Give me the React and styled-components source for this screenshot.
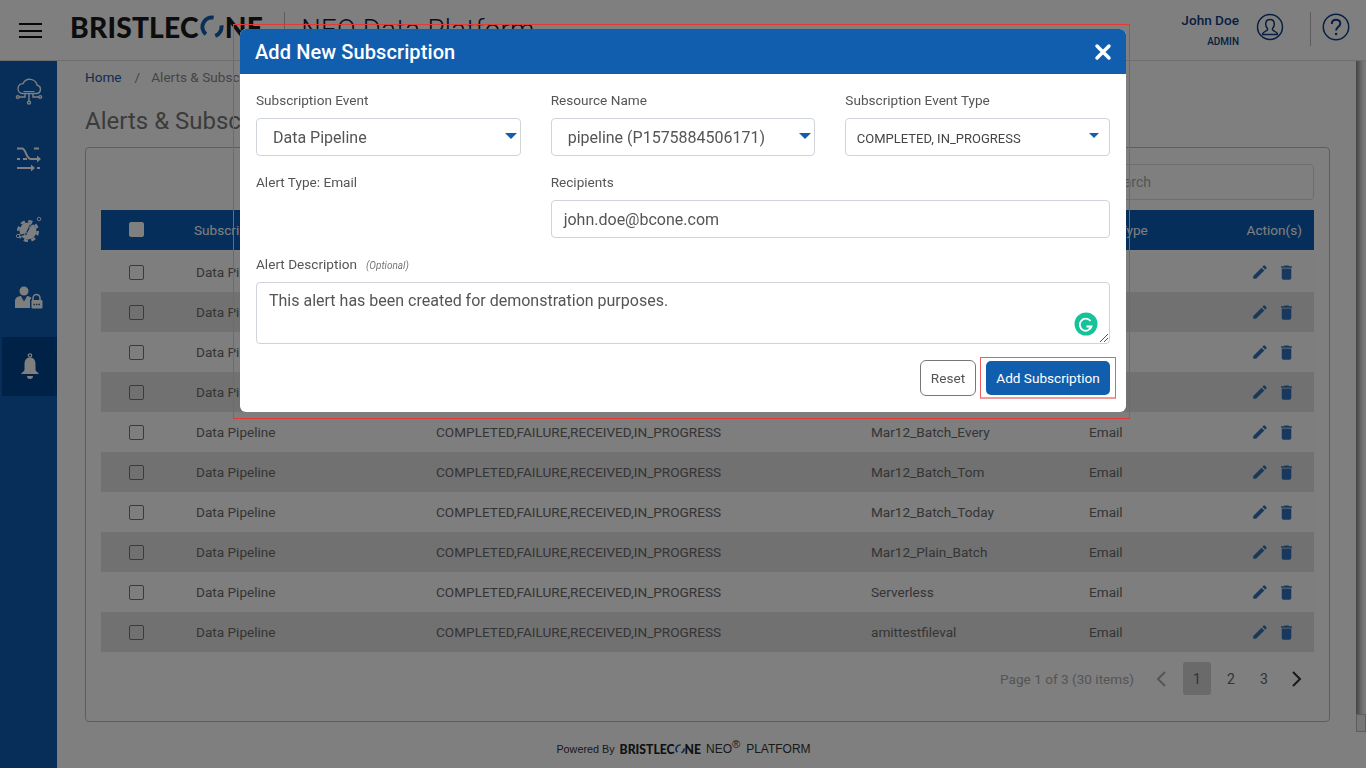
import React from "react";
import styled, { createGlobalStyle } from "styled-components";
import { MdEdit, MdDelete } from "react-icons/md";

const Global = createGlobalStyle`
  html, body { margin: 0; padding: 0; height: 100%; overflow: hidden; background: #fff; }
  body { font-family: Roboto, "Liberation Sans", sans-serif; }
  * { box-sizing: border-box; }
`;

const Page = styled.div`
  width: 1366px; height: 768px; display: flex; flex-direction: column; overflow: hidden; background: #fff;
`;
const TopBar = styled.header`
  height: 61px; flex: none; display: flex; align-items: flex-start; background: #fff; border-bottom: 1px solid #ddd;
`;
const Burger = styled.div`
  width: 23px; margin: 23px 0 0 19px; height: 15px; display: flex; flex-direction: column; justify-content: space-between;
  span { display: block; height: 2px; background: #111; }
`;
const Logo = styled.div`
  margin: 9px 0 0 28px; display: flex; align-items: center; height: 36px;
  font-family: Lato, sans-serif; font-weight: 900; color: #1a1a1a; font-size: 28.2px; letter-spacing: 0.2px; white-space: nowrap;
  svg { margin: 0 1px 0 1px; }
`;
const VBar = styled.div`
  width: 1px; height: 34px; background: #bbb; margin: ${p => p.$m};
`;
const Product = styled.div`
  font-size: 27.5px; font-weight: 300; color: #111b3a; margin: 13px 0 0 16px; letter-spacing: 0.3px; white-space: nowrap;
`;
const UserBlock = styled.div`
  margin: 12px 0 0 auto; text-align: right; color: #0f3f80;
`;
const UserName = styled.div`font-size: 13.6px; font-weight: 500; line-height: 17px;`;
const UserRole = styled.div`font-size: 10px; font-weight: 500; line-height: 12px; margin-top: 7px;`;
const RoundIcon = styled.svg`
  width: 28px; height: 28px; flex: none; margin: ${p => p.$m}; color: #0f3f80;
`;

const Body = styled.div`
  flex: 1; display: flex; min-height: 0;
`;
const Side = styled.nav`
  width: 57px; flex: none; background: #0c5cb0; display: flex; flex-direction: column; gap: 10px;
`;
const SideItem = styled.div`
  height: 59px; display: flex; align-items: center; justify-content: center;
  margin-left: ${p => (p.$active ? 2 : 0)}px;
  background: ${p => (p.$active ? "#02458f" : "transparent")};
  svg { display: block; }
`;
const Main = styled.main`
  flex: 1; min-width: 0; padding: 7px 26px 0 28px; display: flex; flex-direction: column;
`;
const Crumbs = styled.div`
  font-size: 13.6px; line-height: 18px; color: #8a8a8a; display: flex; white-space: nowrap;
  a { color: #1c58a8; }
  i { font-style: normal; margin: 0 11px 0 13px; }
`;
const Title = styled.h1`
  margin: 20px 0 11px; font-size: 24px; line-height: 30px; font-weight: 400; color: #777;
`;
const Card = styled.section`
  height: 575px; border: 1px solid #bbb; border-radius: 4px; padding: 16px 15px 0 15px; display: flex; flex-direction: column;
`;
const SearchRow = styled.div`
  display: flex; justify-content: flex-end; height: 46px;
`;
const SearchBox = styled.div`
  width: 219px; height: 36px; border: 1px solid #ddd; border-radius: 4px; padding: 0 12px; line-height: 34px; font-size: 14px; color: #aaa;
`;
const Row = styled.div`
  display: grid; grid-template-columns: 95px 240px 435px 218px 1fr 62px; align-items: center;
  height: 40px; font-size: 13.6px; white-space: nowrap;
  color: ${p => (p.$head ? "#fff" : "#6a6a6a")};
  background: ${p => (p.$head ? "#0c5cb4" : p.$alt ? "#e2e2e2" : "#fcfcfc")};
  margin-bottom: ${p => (p.$head ? 2 : 0)}px;
  padding-bottom: ${p => (p.$head ? 1 : 0)}px;
`;
const Check = styled.span`
  justify-self: start; margin-left: 28px; width: 15px; height: 15px; border-radius: 2px; display: block;
  background: ${p => (p.$head ? "#fff" : "transparent")};
  border: 1px solid ${p => (p.$head ? "#fff" : "#777")};
`;
const HeadCell = styled.span`
  margin-left: -2px; font-weight: 400;
`;
const ActionsHead = styled.span`
  grid-column: 6; justify-self: end; margin-right: 12px;
`;
const Actions = styled.span`
  display: flex; gap: 8px; align-items: center; justify-self: end; margin-right: 18px; color: #2f73bd;
  svg { display: block; }
`;
const Pager = styled.div`
  display: flex; align-items: center; justify-content: flex-end; margin-top: 10px; height: 33px; padding-right: 11px; font-size: 14px; color: #666;
`;
const PagerInfo = styled.span`
  color: #aaa; margin-right: 21px; font-size: 13.6px;
`;
const PageBtn = styled.span`
  width: 28px; height: 33px; display: flex; align-items: center; justify-content: center; border-radius: 3px; margin-left: ${p => p.$ml || 0}px;
  background: ${p => (p.$on ? "#d4d4d4" : "transparent")};
`;
const Chevron = styled.svg`
  display: block; margin: ${p => p.$m};
`;
const Foot = styled.footer`
  margin-top: 19px; display: flex; align-items: center; justify-content: center; color: #333;
  font-family: "Liberation Sans", sans-serif; font-size: 12px; height: 16px; white-space: nowrap; margin-left: -48px;
`;
const PoweredBy = styled.span`font-size: 10.8px; margin-right: 5px;`;
const FootLogo = styled.span`
  font-family: Lato, sans-serif; font-weight: 900; font-size: 12.2px; color: #222; display: flex; align-items: center; margin-right: 5px;
`;
const FootNeo = styled.span`
  sup { font-size: 11px; line-height: 0; }
  b { font-weight: 400; margin-left: 6px; }
`;
const ScrollStrip = styled.div`
  width: 10px; flex: none; height: 671px; display: flex; flex-direction: column; justify-content: flex-end;
  background: linear-gradient(90deg, #888 0%, #e8e8e8 70%, #f4f4f4 100%);
`;
const ScrollThumb = styled.div`
  height: 18px; background: #eee; border: 1px solid #bbb;
`;

const Overlay = styled.div`
  position: fixed; inset: 0; background: rgba(0,0,0,.5); display: flex; justify-content: center; align-items: flex-start; padding-top: 29px;
`;
const Modal = styled.div`
  position: relative; width: 886px; height: 383px; background: #fff; border-radius: 6px; display: flex; flex-direction: column;
`;
const Marker = styled.div`
  position: absolute; left: -7px; top: -5px; right: -4px; bottom: -7px; border: 1px solid #e53935; pointer-events: none;
`;
const ModalHead = styled.div`
  height: 45px; background: #115eaf; color: #fff; border-radius: 6px 6px 0 0; display: flex; align-items: center; justify-content: space-between;
  padding: 0 14px 0 15px; font-size: 20px; font-weight: 500; letter-spacing: 0.1px;
  svg { display: block; }
`;
const Form = styled.div`
  padding: 17px 16px 0; display: flex; flex-direction: column;
`;
const Grid = styled.div`
  display: grid; grid-template-columns: repeat(3, 1fr); column-gap: 30px;
`;
const Field = styled.div`
  grid-column: ${p => p.$span || "auto"}; height: 82px;
`;
const Label = styled.div`
  font-size: 13.6px; line-height: 18px; color: #555; margin-bottom: 9px;
  em { font-size: 10px; margin-left: 9px; color: #777; }
`;
const Select = styled.div`
  position: relative; height: 38px; border: 1px solid #ced4da; border-radius: 4px; display: flex; align-items: center;
  padding-left: ${p => (p.$small ? 10.5 : 16)}px; padding-top: ${p => (p.$small ? 2 : 0)}px;
  font-size: ${p => (p.$small ? 13 : 16)}px; color: ${p => (p.$small ? "#444" : "#555")}; white-space: nowrap;
  &::after {
    content: ""; position: absolute; top: 14px; right: ${p => (p.$small ? 10 : 3)}px;
    border-left: ${p => (p.$small ? 5 : 6)}px solid transparent; border-right: ${p => (p.$small ? 5 : 6)}px solid transparent;
    border-top: ${p => (p.$small ? 5 : 6)}px solid #115eaf;
  }
`;
const Input = styled.div`
  height: 38px; border: 1px solid #ced4da; border-radius: 4px; padding-left: 12px; display: flex; align-items: center; font-size: 16px; color: #555;
`;
const Textarea = styled.div`
  position: relative; height: 62px; margin-top: -2px; border: 1px solid #ced4da; border-radius: 4px; padding: 8px 12px; font-size: 16px; line-height: 20px; color: #555;
`;
const GrammarlyBadge = styled.svg`
  position: absolute; right: 11px; bottom: 7px; width: 24px; height: 24px;
`;
const ResizeGrip = styled.svg`
  position: absolute; right: 0; bottom: 0; width: 10px; height: 10px;
`;
const ButtonRow = styled.div`
  display: flex; justify-content: flex-end; align-items: center; margin-top: 16px; gap: 10px;
`;
const ResetBtn = styled.button`
  width: 56px; height: 36px; border: 1px solid #777; border-radius: 6px; background: #fff; font: 400 13.6px Roboto, sans-serif; color: #555; padding: 0;
`;
const SubmitWrap = styled.div`position: relative;`;
const SubmitBtn = styled.button`
  display: block; width: 124px; height: 34px; border: 0; border-radius: 5px; background: #115eaf; color: #fff; font: 400 13.6px Roboto, sans-serif; padding: 0;
`;
const SubmitMarker = styled.div`
  position: absolute; left: -6px; right: -6px; top: -4px; bottom: -4px; border: 1px solid #f25c5c; border-bottom-width: 2px; border-bottom-color: #f59a9a; pointer-events: none;
`;

const LogoO = ({ s }) => (
  <svg width={s} height={s} viewBox="0 0 24 24" fill="none" stroke="#115eaf" strokeWidth="4">
    <path d="M13.65 2.64A9.5 9.5 0 0 0 5.89 19.28" />
    <path d="M15.25 20.93A9.5 9.5 0 0 0 21.36 10.35" />
  </svg>
);

const CloudIcon = () => (
  <svg width="28" height="28" viewBox="0 0 28 28" fill="none" stroke="#fff" strokeWidth="1.4">
    <path d="M7 16.5h14.5a4.2 4.2 0 0 0 .6-8.3A7.5 7.5 0 0 0 8 6.6 5 5 0 0 0 7 16.5z" />
    <path d="M8.5 14.5h11" strokeWidth="1" />
    <path d="M14 16.5v8M10 16.5v3.5H4M18 16.5v3.5h6" />
    <circle cx="2.8" cy="20" r="1.4" /><circle cx="25.2" cy="20" r="1.4" /><circle cx="14" cy="25.6" r="1.5" />
  </svg>
);
const ShuffleIcon = () => (
  <svg width="26" height="28" viewBox="0 0 26 28" fill="none" stroke="#fff" strokeWidth="2">
    <path d="M1 2.500H6C10 2.500 10 13 15 13H22" />
    <path d="M1 13h3M7 13h4M18 2.500h5" />
    <path d="M1 22H16M21 22h3" />
    <path d="M21 9.500l4 3.500-4 3.500zM15 18.500l4 3.500-4 3.500z" fill="#fff" stroke="none" />
  </svg>
);
const GearIcon = () => (
  <svg width="27" height="26" viewBox="0 0 27 26">
    <circle cx="13" cy="15" r="8.500" fill="#fff" />
    <circle cx="13" cy="15" r="9.800" fill="none" stroke="#fff" strokeWidth="2.600" strokeDasharray="4.200 3.500" />
    <path d="M3 20l8-2 4-8 9-7" fill="none" stroke="#0c5cb0" strokeWidth="1.300" />
    <g fill="#0c5cb0" stroke="#fff" strokeWidth=".9">
      <circle cx="3" cy="20" r="1.700" /><circle cx="11" cy="18" r="1.400" /><circle cx="15" cy="10" r="1.400" /><circle cx="24" cy="3" r="1.800" />
    </g>
  </svg>
);
const UserLockIcon = () => (
  <svg width="28" height="24" viewBox="0 0 28 24">
    <circle cx="9" cy="5" r="4.500" fill="#fff" />
    <path fill="#fff" d="M0 22v-7c0-3 2-4.500 6-5l2.600 5.500L9 12l.4 3.500L12 10c2 .3 3.600 1 4.500 2L15 14v8z" />
    <path d="M18 14v-2a3.500 3.500 0 0 1 7 0v2" fill="none" stroke="#fff" strokeWidth="1.500" />
    <rect x="16.500" y="14" width="11" height="8.500" rx="1.200" fill="#fff" />
    <path d="M18.500 18.500h7" stroke="#0c5cb0" strokeWidth="1.500" strokeDasharray="1.500 1" />
  </svg>
);
const BellIcon = () => (
  <svg width="18" height="28" viewBox="0 0 18 28">
    <circle cx="9" cy="2.500" r="1.700" fill="none" stroke="#fff" strokeWidth="1.200" />
    <path fill="#fff" d="M9 4.500c3.500 0 5.500 2.800 5.500 6.500v5.500c0 1.500 1.500 2.500 3 3.500v1H.5v-1c1.500-1 3-2 3-3.500V11c0-3.700 2-6.500 5.500-6.500z" />
    <path fill="#fff" d="M6 23h6a3 3 0 0 1-6 0z" />
  </svg>
);

const rows = [
  ["Mar12_Batch_Hourly", 0], ["Mar12_Batch_Daily", 1], ["Mar12_Batch_Weekly", 0], ["Mar12_Batch_Now", 1],
  ["Mar12_Batch_Every", 0], ["Mar12_Batch_Tom", 1], ["Mar12_Batch_Today", 0], ["Mar12_Plain_Batch", 1],
  ["Serverless", 0], ["amittestfileval", 1],
];

export default function App() {
  return (
    <Page>
      <Global />
      <TopBar>
        <Burger><span /><span /><span /></Burger>
        <Logo>BRISTLEC<LogoO s={24} />NE</Logo>
        <VBar $m="12px 0 0 21px" />
        <Product>NEO Data Platform</Product>
        <UserBlock>
          <UserName>John Doe</UserName>
          <UserRole>ADMIN</UserRole>
        </UserBlock>
        <RoundIcon $m="13px 0 0 17px" viewBox="0 0 28 28" fill="none" stroke="currentColor" strokeWidth="1.5">
          <circle cx="14" cy="14" r="12.500" />
          <path d="M14 6.500c-2.600 0-4.300 2-4.300 4.700 0 1.800.8 3.300 1.800 4.300v1.300c0 1-3.800 1.700-4.800 3.700v1h14.600v-1c-1-2-4.800-2.700-4.800-3.700v-1.300c1-1 1.800-2.500 1.800-4.300 0-2.700-1.700-4.700-4.300-4.700z" />
        </RoundIcon>
        <VBar $m="12px 0 0 26px" />
        <RoundIcon $m="13px 16px 0 11px" viewBox="0 0 28 28" fill="none" stroke="currentColor" strokeWidth="1.5">
          <circle cx="14" cy="14" r="12.700" />
          <path d="M9.800 11c0-2.600 1.900-4.200 4.300-4.200s4.200 1.500 4.200 3.700c0 3.300-4.200 3.200-4.200 7" strokeWidth="2" />
          <circle cx="14.100" cy="21" r="1.300" fill="currentColor" stroke="none" />
        </RoundIcon>
      </TopBar>
      <Body>
        <Side>
          <SideItem><CloudIcon /></SideItem>
          <SideItem><ShuffleIcon /></SideItem>
          <SideItem><GearIcon /></SideItem>
          <SideItem><UserLockIcon /></SideItem>
          <SideItem $active><BellIcon /></SideItem>
        </Side>
        <Main>
          <Crumbs><a>Home</a><i>/</i><span>Alerts &amp; Subscriptions</span></Crumbs>
          <Title>Alerts &amp; Subscriptions</Title>
          <Card>
            <SearchRow><SearchBox>Search</SearchBox></SearchRow>
            <Row $head>
              <Check $head />
              <HeadCell>Subscription Event</HeadCell>
              <HeadCell>Subscription Event Type</HeadCell>
              <HeadCell>Resource Name</HeadCell>
              <HeadCell>Alert Type</HeadCell>
              <ActionsHead>Action(s)</ActionsHead>
            </Row>
            {rows.map(([name, alt]) => (
              <Row key={name} $alt={alt}>
                <Check />
                <span>Data Pipeline</span>
                <span>COMPLETED,FAILURE,RECEIVED,IN_PROGRESS</span>
                <span>{name}</span>
                <span>Email</span>
                <Actions><MdEdit size={18} /><MdDelete size={19} /></Actions>
              </Row>
            ))}
            <Pager>
              <PagerInfo>Page 1 of 3 (30 items)</PagerInfo>
              <Chevron $m="0 16px 0 0" width="12" height="18" viewBox="0 0 12 18" fill="none" stroke="#aaa" strokeWidth="2"><path d="M10 2L3 9l7 7" /></Chevron>
              <PageBtn $on>1</PageBtn>
              <PageBtn $ml={6}>2</PageBtn>
              <PageBtn $ml={5}>3</PageBtn>
              <Chevron $m="0 0 0 13px" width="12" height="18" viewBox="0 0 12 18" fill="none" stroke="#333" strokeWidth="2"><path d="M2 2l7 7-7 7" /></Chevron>
            </Pager>
          </Card>
          <Foot>
            <PoweredBy>Powered By</PoweredBy>
            <FootLogo>BRISTLEC<LogoO s={10} />NE</FootLogo>
            <FootNeo>NEO<sup>®</sup><b>PLATFORM</b></FootNeo>
          </Foot>
        </Main>
        <ScrollStrip><ScrollThumb /></ScrollStrip>
      </Body>
      <Overlay>
        <Modal>
          <Marker />
          <ModalHead>
            Add New Subscription
            <svg width="18" height="18" viewBox="0 0 18 18" stroke="#fff" strokeWidth="3.500" strokeLinecap="round"><path d="M3 3l12 12M15 3L3 15" /></svg>
          </ModalHead>
          <Form>
            <Grid>
              <Field><Label>Subscription Event</Label><Select>Data Pipeline</Select></Field>
              <Field><Label>Resource Name</Label><Select>pipeline (P1575884506171)</Select></Field>
              <Field><Label>Subscription Event Type</Label><Select $small>COMPLETED, IN_PROGRESS</Select></Field>
              <Field><Label>Alert Type: Email</Label></Field>
              <Field $span="span 2"><Label>Recipients</Label><Input>john.doe@bcone.com</Input></Field>
            </Grid>
            <Label>Alert Description<em>(Optional)</em></Label>
            <Textarea>
              This alert has been created for demonstration purposes.
              <GrammarlyBadge viewBox="0 0 24 24">
                <circle cx="12" cy="12" r="11.500" fill="#15c39a" />
                <path d="M16.500 9a6 6 0 1 0 1 5.500h-5" fill="none" stroke="#fff" strokeWidth="1.800" />
                <path d="M15 17l2.500-2.500" stroke="#fff" strokeWidth="1.800" />
              </GrammarlyBadge>
              <ResizeGrip viewBox="0 0 10 10" stroke="#555" strokeWidth="1">
                <path d="M1 9l8-8M5 9l4-4" />
              </ResizeGrip>
            </Textarea>
            <ButtonRow>
              <ResetBtn>Reset</ResetBtn>
              <SubmitWrap>
                <SubmitBtn>Add Subscription</SubmitBtn>
                <SubmitMarker />
              </SubmitWrap>
            </ButtonRow>
          </Form>
        </Modal>
      </Overlay>
    </Page>
  );
}
